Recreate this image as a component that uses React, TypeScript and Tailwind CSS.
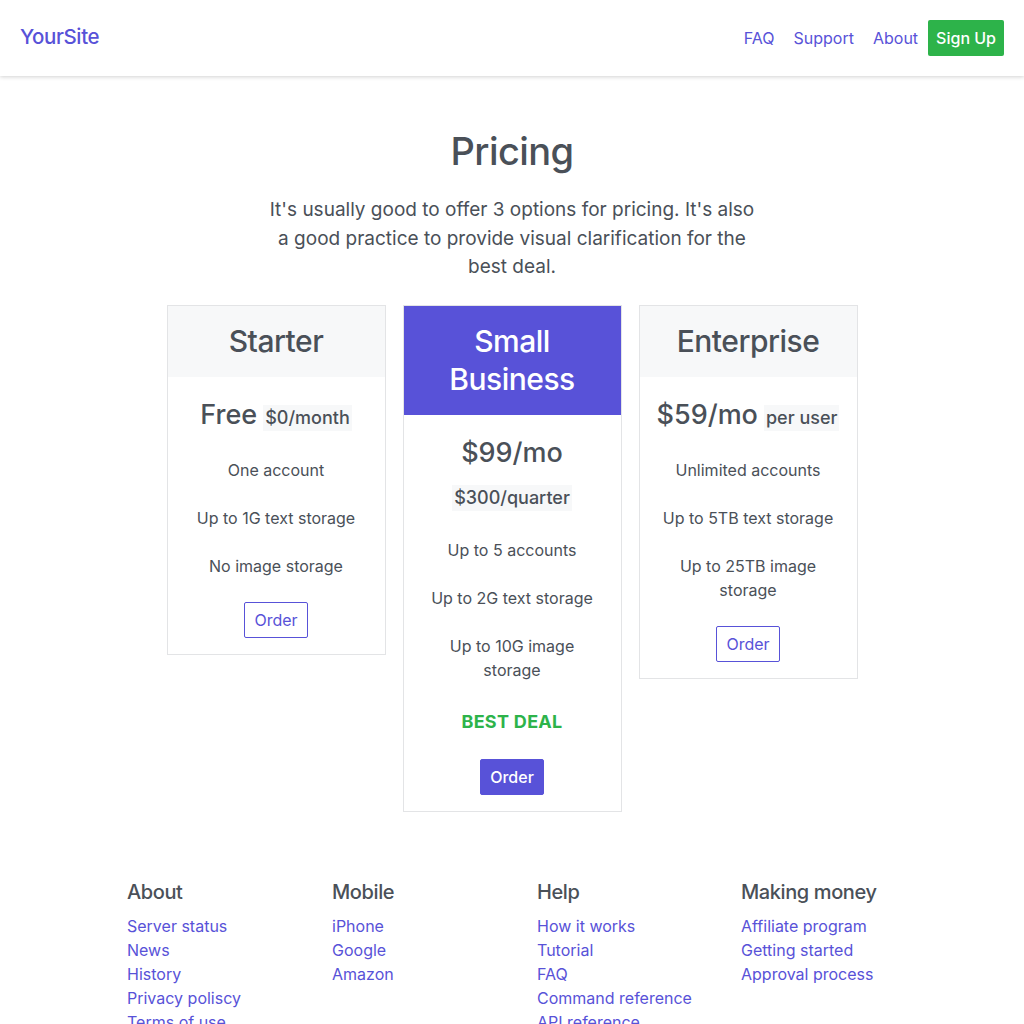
import React from "react";

const plans = [
  {
    name: "Starter",
    price: "Free",
    note: "$0/month",
    inline: true,
    features: ["One account", "Up to 1G text storage", "No image storage"],
    featured: false,
  },
  {
    name: "Small Business",
    price: "$99/mo",
    note: "$300/quarter",
    inline: false,
    features: ["Up to 5 accounts", "Up to 2G text storage", "Up to 10G image storage"],
    featured: true,
  },
  {
    name: "Enterprise",
    price: "$59/mo",
    note: "per user",
    inline: true,
    features: ["Unlimited accounts", "Up to 5TB text storage", "Up to 25TB image storage"],
    featured: false,
  },
];

const footer = [
  { title: "About", links: ["Server status", "News", "History", "Privacy poliscy", "Terms of use"] },
  { title: "Mobile", links: ["iPhone", "Google", "Amazon"] },
  { title: "Help", links: ["How it works", "Tutorial", "FAQ", "Command reference", "API reference"] },
  { title: "Making money", links: ["Affiliate program", "Getting started", "Approval process"] },
];

function PlanCard({ plan }: { plan: (typeof plans)[number] }) {
  return (
    <div className="w-[219px] border border-[#e3e4e6] bg-white">
      <div
        className={
          plan.featured
            ? "bg-[#5852d8] px-4 pb-[17px] pt-4 text-center text-[30px] font-medium leading-[38px] tracking-[-0.5px] text-white"
            : "bg-[#f7f8f9] px-4 pb-[17px] pt-4 text-center text-[30px] font-medium leading-[38px] tracking-[-0.5px] text-[#4a5058]"
        }
      >
        {plan.name}
      </div>
      <div className="flex flex-col items-center px-[16px] pb-4 pt-[20px] text-center">
        {plan.inline ? (
          <div className="flex items-baseline gap-[6px] whitespace-nowrap leading-[36px]">
            <span className="text-[27px] font-medium">{plan.price}</span>
            <span className="bg-[#f7f8f9] px-[2px] text-[18px] font-medium leading-[26px]">{plan.note}</span>
          </div>
        ) : (
          <div className="flex flex-col items-center pb-[2px]">
            <span className="text-[27px] font-medium leading-[36px]">{plan.price}</span>
            <span className="mt-[14px] bg-[#f7f8f9] px-[2px] text-[18px] font-medium leading-[26px]">{plan.note}</span>
          </div>
        )}
        <ul className="mt-[25px] flex flex-col gap-[24px] text-[16px] leading-[24px]">
          {plan.features.map((f) => (
            <li key={f}>{f}</li>
          ))}
        </ul>
        {plan.featured && (
          <div className="mt-[26px] text-[18px] font-bold tracking-[0.3px] text-[#2db34a]">BEST DEAL</div>
        )}
        <button
          className={
            plan.featured
              ? "mt-[24px] rounded-[2px] border border-[#5852d8] bg-[#5852d8] px-[9px] py-[5px] text-[16px] font-medium leading-[24px] text-white"
              : "mt-[24px] rounded-[2px] border border-[#5852d8] bg-white px-[9px] py-[5px] text-[16px] leading-[24px] text-[#5852d8]"
          }
        >
          Order
        </button>
      </div>
    </div>
  );
}

export default function App() {
  return (
    <div className="min-h-screen bg-white font-['Inter',sans-serif] text-[#4a5058]">
      <nav className="flex h-[76px] items-center justify-between px-5 shadow-[0_1px_4px_rgba(0,0,0,0.18)]">
        <a className="-mt-[2px] text-[20.5px] font-medium tracking-[-0.4px] text-[#5852d8]">YourSite</a>
        <div className="flex items-center gap-[19px] text-[16px] text-[#5852d8]">
          <a>FAQ</a>
          <a>Support</a>
          <a>About</a>
          <button className="-ml-[9px] rounded-[2px] bg-[#2db34a] px-[8px] py-[6px] text-[16px] font-medium leading-[24px] text-white">
            Sign Up
          </button>
        </div>
      </nav>

      <main className="flex flex-col items-center pt-[49px]">
        <h1 className="text-[38px] font-medium leading-[52px] tracking-[-0.6px]">Pricing</h1>
        <p className="mt-[19px] w-[500px] text-center text-[19px] leading-[28.5px]">
          It's usually good to offer 3 options for pricing. It's also a good practice to provide visual clarification
          for the best deal.
        </p>
        <div className="mt-[23px] flex items-start gap-[17px]">
          {plans.map((p) => (
            <PlanCard key={p.name} plan={p} />
          ))}
        </div>
      </main>

      <footer className="grid grid-cols-[205px_205px_204px_205px] pl-[127px] pt-[68px]">
        {footer.map((col) => (
          <div key={col.title}>
            <h3 className="mb-[10px] text-[20px] font-medium leading-[24px] tracking-[-0.4px]">{col.title}</h3>
            <ul className="text-[16px] leading-[24px] text-[#5852d8]">
              {col.links.map((l) => (
                <li key={l}>
                  <a>{l}</a>
                </li>
              ))}
            </ul>
          </div>
        ))}
      </footer>
    </div>
  );
}
